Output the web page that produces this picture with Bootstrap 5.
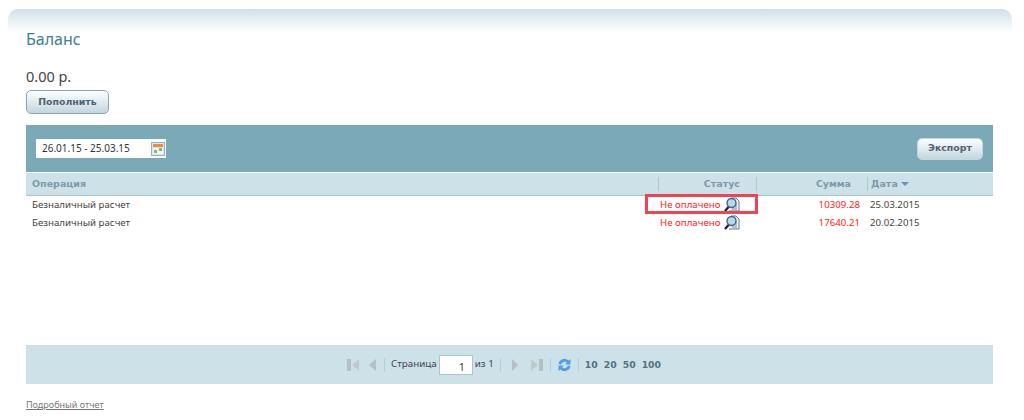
<!DOCTYPE html>
<html lang="ru"><head><meta charset="utf-8"><title>Баланс</title>
<link href="https://cdn.jsdelivr.net/npm/bootstrap@5.3.0/dist/css/bootstrap.min.css" rel="stylesheet">
<style>
html,body{height:420px;overflow:hidden}
body{font-family:"Noto Sans","DejaVu Sans",sans-serif;font-size:9.7px;color:#444;background:#fff;padding-top:9px}
.top-band{height:24px;margin:0 12px 0 8px;border-radius:10px 10px 0 0;background:linear-gradient(#cfe2e8,#fff)}
.page-body{padding:0 31px 0 26px}
.page-title{font-size:16px;line-height:20px;color:#3f7d96;font-weight:400;margin:-4px 0 0}
.bal{font-size:14.5px;line-height:20px;color:#444;margin:17px 0 4px}
.skin-btn{font-family:"DejaVu Sans",sans-serif;font-weight:700;font-size:9.4px;color:#4d6272;border:1px solid #87a8b6;border-radius:5px;background:linear-gradient(#fdfefe,#c3d6de);padding:0;display:flex;align-items:center;justify-content:center}
.btn-add{width:83px;height:24px}
.btn-exp{width:66px;height:22px;border-color:#c5d6dc}
.tool-bar{height:47px;margin-top:11px;background:#7ca9b7;padding:0 10px}
.date-box{width:130px;height:19px;background:#fff;font-size:10px;color:#333;padding-left:6px;padding-right:1px}
.head-row{height:23px;margin-top:1px;background:#cce2e8;border-bottom:1px solid #a6c3cc;font-family:"DejaVu Sans",sans-serif;font-weight:700;font-size:9.5px;color:#7d9aa8}
.data-row{height:18px;color:#444}
.col-op{padding-left:6px;flex:1 1 0}
.hd-stat{width:97px;text-align:right;padding-right:16px}
.hd-sum{width:98px;text-align:right;padding-right:4px}
.hd-date{width:125px;padding-left:3px}
.hd-sep{width:1px;height:14px;background:#a9c8d1;flex:none}
.sep-date{margin-left:12px}
.cell-stat{width:98px;display:flex;align-items:center;color:#f22;padding-left:2px;gap:3px}
.cell-sum{width:104px;text-align:right;color:#f22}
.cell-date{width:133px;padding-left:10px}
.hl-box{position:absolute;left:619px;top:-2px;width:113px;height:20px;border:3px solid #ee4455;pointer-events:none}
.spacer-rows{height:113px}
.pager-bar{height:39px;background:#cce2e8;padding-right:11px;font-size:9.8px;color:#445}
.pg-sep{width:1px;height:14px;background:#a8d0ea;margin:0 6px}
.pg-input{width:34px;height:20px;border:1px solid #a9c3cf;background:#fff;text-align:right;padding:4px 7px 0 0;margin:0 2px;font-size:10px;line-height:14px;color:#333}
.sizes{font-family:"DejaVu Sans",sans-serif;font-weight:700;font-size:9.3px;color:#55707f;gap:6px}
.report-link{display:inline-block;margin-top:14px;font-size:9px;color:#777;text-decoration:underline}
</style></head>
<body>
<div class="top-band"></div>
<div class="page-body">
<h1 class="page-title">Баланс</h1>
<div class="bal">0.00 р.</div>
<button class="skin-btn btn-add" type="button">Пополнить</button>
<div class="tool-bar d-flex align-items-center justify-content-between">
 <div class="date-box d-flex align-items-center justify-content-between">26.01.15 - 25.03.15
  <svg width="14" height="14" viewBox="0 0 14 14"><rect x=".5" y=".5" width="13" height="13" fill="#d5e8f2" stroke="#8fb4cb"/><rect x="2" y="2" width="10" height="3" fill="#f08a3c"/><rect x="2" y="6" width="10" height="6" fill="#f7f7ee"/><rect x="3" y="8" width="3" height="3" fill="#7cb97c"/><rect x="8" y="6" width="3" height="3" fill="#7cb97c"/></svg>
 </div>
 <button class="skin-btn btn-exp" type="button">Экспорт</button>
</div>
<div class="head-row d-flex align-items-center">
 <div class="col-op">Операция</div><span class="hd-sep"></span>
 <div class="hd-stat">Статус</div><span class="hd-sep"></span>
 <div class="hd-sum">Сумма</div><span class="hd-sep sep-date"></span>
 <div class="hd-date">Дата <svg width="8" height="4" viewBox="0 0 8 4"><path d="M0 0h8L4 4z" fill="#5f93c0"/></svg></div>
</div>
<div class="data-row d-flex align-items-center position-relative">
 <div class="col-op">Безналичный расчет</div>
 <div class="cell-stat">Не оплачено
  <svg width="16" height="16" viewBox="0 0 16 16"><path d="M7 1h5l3 3v10H5" fill="#eef4f8" stroke="#5f7688"/><path d="M11 8h2M11 10h2M8 12h5" stroke="#789"/><circle cx="7.500" cy="6" r="4.500" fill="#b9d6ec" stroke="#3f6684" stroke-width="1.400"/><path d="M4.500 10 1 14" stroke="#223" stroke-width="2.400"/></svg></div>
 <div class="cell-sum">10309.28</div><div class="cell-date">25.03.2015</div>
 <div class="hl-box"></div>
</div>
<div class="data-row d-flex align-items-center">
 <div class="col-op">Безналичный расчет</div>
 <div class="cell-stat">Не оплачено
  <svg width="16" height="16" viewBox="0 0 16 16"><path d="M7 1h5l3 3v10H5" fill="#eef4f8" stroke="#5f7688"/><path d="M11 8h2M11 10h2M8 12h5" stroke="#789"/><circle cx="7.500" cy="6" r="4.500" fill="#b9d6ec" stroke="#3f6684" stroke-width="1.400"/><path d="M4.500 10 1 14" stroke="#223" stroke-width="2.400"/></svg></div>
 <div class="cell-sum">17640.21</div><div class="cell-date">20.02.2015</div>
</div>
<div class="spacer-rows"></div>
<div class="pager-bar d-flex align-items-center justify-content-center">
 <svg width="13" height="14" viewBox="0 0 13 14"><rect y="1" width="4" height="12" fill="#b5c0c4"/><path d="M12 1v12L5 7z" fill="#c0cacd"/></svg>
 <svg width="8" height="14" viewBox="0 0 8 14" class="ms-2"><path d="M8 1v12L1 7z" fill="#b5c0c4"/></svg>
 <span class="pg-sep ms-2"></span><span>Страница</span><span class="pg-input">1</span><span>из 1</span><span class="pg-sep"></span>
 <svg width="8" height="14" viewBox="0 0 8 14" class="mx-1"><path d="M1 1v12l6-6z" fill="#b5c0c4"/></svg>
 <svg width="13" height="14" viewBox="0 0 13 14" class="ms-2"><path d="M0 1v12l7-6z" fill="#c0cacd"/><rect x="8" y="1" width="4" height="12" fill="#b5c0c4"/></svg>
 <span class="pg-sep"></span>
 <svg width="15" height="16" viewBox="0 0 15 16"><path d="M1.500 7a6 6 0 0 1 10-3.500L13.500 2v5.500H8L10 5.500A4 4 0 0 0 4 7.500z" fill="#4f9fe2"/><path d="M13.500 9a6 6 0 0 1-10 3.500L1.500 14V8.500H7L5 10.500A4 4 0 0 0 11 8.500z" fill="#4f9fe2"/></svg>
 <span class="pg-sep"></span>
 <div class="sizes d-flex"><span>10</span><span>20</span><span>50</span><span>100</span></div>
</div>
<a class="report-link" href="#">Подробный отчет</a>
</div>
</body></html>
